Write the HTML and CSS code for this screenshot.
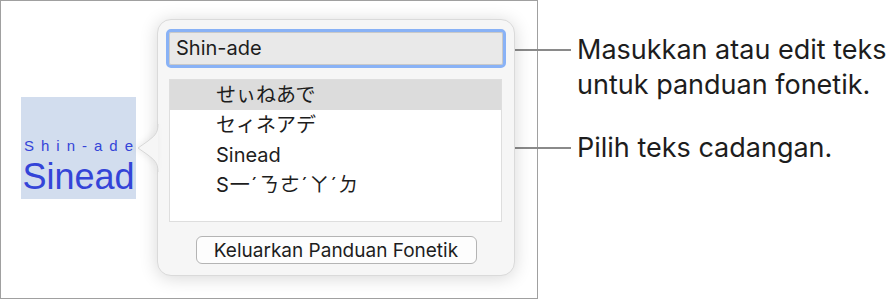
FILE: index.html
```html
<!DOCTYPE html>
<html lang="id">
<head>
    <meta charset="UTF-8">
    <meta name="viewport" content="width=device-width, initial-scale=1.0">
    <title>Panduan Fonetik</title>
    <link rel="stylesheet" href="styles.css">
</head>
<body>
    <div class="stage">
        <div class="frame">
            <div class="ruby-word">
                <span class="ruby">Shin-ade</span>
                <span class="base">Sinead</span>
            </div>

            <div class="popover">
                <svg class="pointer" width="24" height="48" viewBox="0 0 24 48">
                    <path d="M22 0 C22 10 18 12 12 17 L2 24 L12 31 C18 36 22 38 22 48 Z" fill="#f6f6f6"/>
                    <path d="M22 0 C22 10 18 12 12 17 L2 24 L12 31 C18 36 22 38 22 48" fill="none" stroke="#d6d6d6" stroke-width="1"/>
                </svg>

                <div class="field">Shin-ade</div>

                <ul class="choices">
                    <li class="selected">せぃねあで</li>
                    <li>セィネアデ</li>
                    <li>Sinead</li>
                    <li class="bopomofo">S一ˊㄋㄜˊㄚˊㄉ</li>
                </ul>

                <div class="actions">
                    <button class="btn">Keluarkan Panduan Fonetik</button>
                </div>
            </div>
        </div>

        <div class="callouts">
            <div class="callout first">
                <span class="leader"></span>
                <p>Masukkan atau edit teks<br>untuk panduan fonetik.</p>
            </div>
            <div class="callout">
                <span class="leader"></span>
                <p>Pilih teks cadangan.</p>
            </div>
        </div>
    </div>
</body>
</html>
```

FILE: styles.css
```css
body {
    margin: 0;
    background-color: #fff;
    font-family: 'Inter', 'Noto Sans CJK JP', sans-serif;
    color: #1d1d1d;
}
.stage {
    display: flex;
    align-items: flex-start;
}
.frame {
    flex: none;
    box-sizing: border-box;
    width: 538px;
    height: 299px;
    border: 1px solid #a0a0a0;
    display: flex;
    align-items: flex-start;
    padding-left: 20px;
}
.ruby-word {
    flex: none;
    width: 115px;
    height: 102px;
    margin-top: 96px;
    background-color: #d2ddee;
    display: flex;
    flex-direction: column;
    align-items: center;
    justify-content: flex-end;
    padding-bottom: 2px;
    box-sizing: border-box;
    font-family: 'Liberation Sans', Arial, sans-serif;
    color: #3444d8;
}
.ruby {
    font-size: 15px;
    letter-spacing: 7px;
    margin-right: -7px;
    line-height: 18px;
    margin-bottom: 2px;
}
.base {
    font-size: 36px;
    line-height: 40px;
}
.popover {
    flex: none;
    position: relative;
    box-sizing: border-box;
    width: 358px;
    height: 257px;
    margin-left: 21px;
    margin-top: 18px;
    padding: 9px 8px 0 8px;
    background-color: #f6f6f6;
    border: 1px solid #dadada;
    border-radius: 14px;
    box-shadow: 0 2px 18px rgba(0, 0, 0, 0.16);
}
.pointer {
    position: absolute;
    left: -22px;
    top: 104px;
    filter: drop-shadow(-2px 0 3px rgba(0, 0, 0, 0.08));
}
.field {
    box-sizing: border-box;
    height: 39px;
    border: 3px solid #89b2f6;
    border-radius: 5px;
    background-color: #e9e9e9;
    box-shadow: inset 0 0 0 1px #c9c9c9;
    padding-left: 7px;
    font-size: 20px;
    line-height: 33px;
}
.choices {
    list-style: none;
    margin: 11px 4px 0 3px;
    padding: 0;
    height: 143px;
    box-sizing: border-box;
    border: 1px solid #dedede;
    background-color: #fff;
}
.choices li {
    height: 30px;
    line-height: 30px;
    padding-left: 46px;
    font-size: 20px;
}
.choices .selected {
    background-color: #dcdcdc;
}
.choices .bopomofo {
    font-family: 'Inter', 'Noto Sans CJK TC', sans-serif;
    letter-spacing: 1px;
}
.actions {
    display: flex;
    justify-content: center;
    margin-top: 14px;
}
.btn {
    box-sizing: border-box;
    width: 281px;
    height: 28px;
    padding: 0;
    border: 1px solid #b4b4b4;
    border-radius: 6px;
    background-color: #fdfdfd;
    font-family: inherit;
    font-size: 19px;
    color: #1d1d1d;
}
.callouts {
    flex: none;
    margin-left: -32px;
    padding-top: 32px;
}
.callout {
    display: flex;
    align-items: flex-start;
}
.callout.first {
    margin-bottom: 28px;
}
.leader {
    flex: none;
    width: 65px;
    height: 2px;
    margin-top: 17px;
    margin-right: 6px;
    background-color: #8a8a8a;
}
.callout p {
    margin: 0;
    font-size: 27px;
    line-height: 35px;
    white-space: nowrap;
}
```
